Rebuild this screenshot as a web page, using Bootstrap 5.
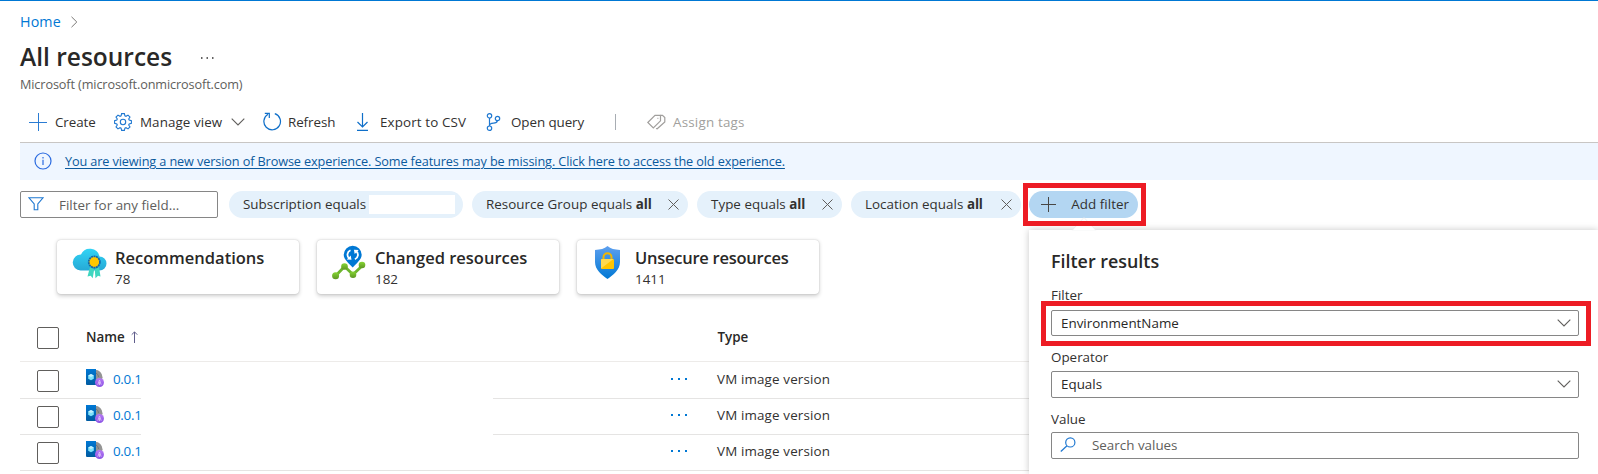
<!doctype html>
<html lang="en">
<head>
<meta charset="utf-8">
<title>All resources</title>
<link rel="stylesheet" href="https://cdn.jsdelivr.net/npm/bootstrap@5.3.0/dist/css/bootstrap.min.css">
<style>
body{font-family:"Open Sans","Noto Sans",sans-serif;font-size:13.4px;line-height:20px;color:#323130;background:#fff}
.portal{height:474px;border-top:1px solid #0078d4;padding-left:20px}
svg{flex:none;display:block}
.crumb{margin-top:11px;height:20px;font-size:14.3px;color:#0078d4}
.crumb a,.res-link{color:#0078d4;text-decoration:none}
.crumb a{letter-spacing:.1px}
.crumb svg{margin-left:9px}
.page-title{margin:8px 0 0;height:33px;line-height:33px;font-size:24.5px;font-weight:600;color:#292827}
.title-dots{margin:3px 0 0 29px}
.tenant{margin-top:1px;height:20px;font-size:12.7px;letter-spacing:-.12px;color:#605e5c}
.toolbar{margin-top:8px;height:41px;border-bottom:1px solid #c8c6c4;padding-left:9px}
.tool{gap:8px}
.tool span{letter-spacing:-.08px}
.tool>svg{margin-top:-1px}
.w1{width:85px}.w2{width:149px}.w3{width:90px}.w4{width:131px}.w5{width:131px}
.w1>svg{margin-top:0}
.tool.w2 span{letter-spacing:.08px}
.w2 span+svg{margin:0 0 0 1px}
.w3{gap:6px}
.w4,.w5{gap:9px}
.tool.w4 span{letter-spacing:.13px}
.sep{width:1px;height:16px;background:#a8adb3;margin-right:31px}
.off{color:#a19f9d;gap:7px}
.tool.off span{letter-spacing:.2px}
.banner{height:37px;background:#eff6ff;padding:0 0 1px 14px;gap:13px}
.banner a{font-size:12.7px;letter-spacing:-.115px;color:#0b5a9d;text-decoration:underline;text-underline-offset:2px;text-decoration-thickness:1px}
.filters{margin-top:11px;height:27px}
.find{width:198px;height:27px;border:1px solid #868686;border-radius:2px;padding:1px 0 0 8px;color:#605e5c;gap:15px}
.find svg{margin:-2px 0 0 -1px}
.find span{letter-spacing:.02px}
.pill{height:27px;border-radius:14px;background:#e5f1fb;padding:0 9px 1px 14px;color:#323130;white-space:pre;letter-spacing:.03px}
.pill b{font-weight:700;letter-spacing:-.1px}
.p1{width:234px;margin-left:11px}.p2{width:216px;margin-left:9px}.p3{width:145px;margin-left:9px}.p4{width:170px;margin-left:9px}
.p5{width:109px;margin-left:8px;background:#b3d6f2;padding:0 9px 1px 12px}
.blank{width:86px;height:19px;background:#fff;margin-left:auto;margin-right:-1px}
.tiles{margin:22px 0 0 37px;gap:18px}
.tile{width:242px;height:54px;border-radius:4px;background:#fff;box-shadow:0 1.6px 4px rgba(0,0,0,.2),0 0 1.5px rgba(0,0,0,.2);padding:5px 0 0 15px;gap:8px}
.tile h2{font-size:16.5px;line-height:24px;font-weight:600;margin:1px 0 0;color:#292827}
.tile:last-child h2{letter-spacing:-.25px}
.tile p{line-height:18px;margin:0}
.listing{margin-top:20px}
.head-row{height:48px;border-bottom:1px solid #edebe9;font-weight:600;color:#292827;letter-spacing:-.05px}
.first{margin-top:1px}
.res-row{display:grid;grid-template-columns:121px 352px 1fr;height:36px}
.res-row>.line{border-bottom:1px solid #e5e4e3}
.res-row.full>.gapcell{border-bottom:1px solid #e5e4e3}
.check{width:22px;height:22px;border:1px solid #605e5c;border-radius:2px;margin-left:17px;flex:none;background:#fff}
.res-row .check{margin-top:1px}
.name-head{margin:-2px 0 0 27px}
.name-head+svg{margin:-2px 0 0 6px}
.type-head{margin:-2px 0 0 580px}
.disk{margin:-6px 9px 0 27px}
.up{margin-top:-4px}
.dotcell{margin-left:177px}
.kind{margin-left:29px;letter-spacing:.15px}
.res-link{letter-spacing:-.3px}
.callout{position:absolute;left:1029px;top:230px;right:0;bottom:0;background:#fff;box-shadow:0 0 7px rgba(0,0,0,.22);padding:16px 19px 0 23px}
.callout>h3,.field-label{margin-left:-1px}
.beak{position:absolute;left:1070px;top:216px}
.callout h3{font-size:17.9px;line-height:30px;height:30px;font-weight:600;margin-bottom:9px;color:#292827}
.field-label{height:20px}
.box{border:1px solid #868686;border-radius:2px;height:27px;margin-left:-1px;padding:0 7px 0 9px;color:#292827}
.b1{margin:5px 0 11px -1px;height:26px}
.b2{margin:4px 0 11px -1px;padding-bottom:1px}
.b3{margin-top:3px;padding:0 0 1px 8px;gap:16px;color:#605e5c}
.b3 svg{margin-top:-1px}
.red{position:absolute;border:5px solid #ed1c24}
.r1{left:1023px;top:183px;width:123px;height:43px}
.r2{left:1041px;top:301px;width:550px;height:45px}
</style>
</head>
<body class="overflow-hidden">
<svg width="0" height="0" class="position-absolute"><defs>
<linearGradient id="gc" x1="0" y1="0" x2="0" y2="1"><stop stop-color="#32d4f5"/><stop offset="1" stop-color="#26a9d6"/></linearGradient>
<linearGradient id="gs" x1="0" y1="0" x2="0" y2="1"><stop stop-color="#5ea0ef"/><stop offset="1" stop-color="#0078d4"/></linearGradient>
<linearGradient id="gg" x1="0" y1="0" x2="0" y2="1"><stop stop-color="#86d633"/><stop offset="1" stop-color="#5e9624"/></linearGradient>
<linearGradient id="gp" x1="0" y1="0" x2="0" y2="1"><stop stop-color="#b77af4"/><stop offset="1" stop-color="#8a52e4"/></linearGradient>
<linearGradient id="gb" x1="0" y1="0" x2="0" y2="1"><stop stop-color="#0078d4"/><stop offset="1" stop-color="#005ba1"/></linearGradient>
<symbol id="x" viewBox="0 0 11 11"><path d="M.5 .5l10 10M10.500.5l-10 10" stroke="#605e5c" fill="none"/></symbol>
<symbol id="chev" viewBox="0 0 14 8"><path d="M.7.7L7 7 13.300.7" stroke="#605e5c" stroke-width="1.1" fill="none"/></symbol>
<symbol id="dots" viewBox="0 0 18 2"><path d="M1 0h2v2H1zM8 0h2v2H8zM15 0h2v2h-2z" fill="#0078d4"/></symbol>
<symbol id="disk" viewBox="0 0 18 18"><path d="M9 .8a7.500 7.500 0 0 1 0 15z" fill="#949494"/><path d="M10 4a4.500 4.500 0 0 1 2.500 4" stroke="#767676" fill="none"/><path d="M0 0h10v16H1a1 1 0 0 1-1-1z" fill="url(#gb)"/><path d="M5 5l2.800 1.500v3.200L5 11.200 2.200 9.700V6.500z" fill="#7fe3fb"/><path d="M5 5l2.800 1.500L5 8 2.200 6.500z" fill="#c3f1ff"/><circle cx="13.500" cy="13.500" r="4.500" fill="url(#gp)"/><path d="M11.800 15.700l1.700-4.700 1.700 4.700M13.500 13v3" stroke="#e3ccfb" stroke-width=".8" fill="none"/></symbol>
</defs></svg>
<main class="portal position-relative">
  <nav class="crumb d-flex align-items-center"><a href="#">Home</a><svg width="8" height="12" viewBox="0 0 8 12"><path d="M1.500.8L6.800 6l-5.300 5.200" stroke="#797775" fill="none"/></svg></nav>
  <h1 class="page-title d-flex align-items-center">All resources<svg class="title-dots" width="13" height="2" viewBox="0 0 13 2"><path d="M0 .3h1.500v1.500H0zM5.500.3H7v1.500H5.500zM11 .3h1.500v1.500H11z" fill="#323130"/></svg></h1>
  <div class="tenant">Microsoft (microsoft.onmicrosoft.com)</div>

  <div class="toolbar d-flex align-items-center">
    <div class="tool w1 d-flex align-items-center"><svg width="18" height="18"><path d="M9.500 0v18M0 9.500h18" stroke="#2b7cd3" fill="none"/></svg><span>Create</span></div>
    <div class="tool w2 d-flex align-items-center"><svg width="18" height="18" viewBox="0 0 18 18" fill="none" stroke="#1f78d1" stroke-width="1.100"><path d="M7.600.6h2.800l.5 2.200 1.100.5 2-1.200 2 2-1.300 1.900.5 1.100 2.200.5v2.800l-2.200.5-.5 1.100 1.300 1.900-2 2-2-1.200-1.100.5-.5 2.200H7.600l-.5-2.200-1.100-.5-2 1.200-2-2 1.300-1.900-.5-1.100L.6 10.400V7.600l2.200-.5.5-1.100L2 4.100l2-2 2 1.200 1.100-.5z"/><circle cx="9" cy="9" r="2.700"/></svg><span>Manage view</span><svg width="14" height="8"><use href="#chev"/></svg></div>
    <div class="tool w3 d-flex align-items-center"><svg width="19" height="19" viewBox="0 0 19 19" fill="none" stroke="#0f6fc9" stroke-width="1.200"><path d="M11.800 1.600A8.300 8.300 0 1 1 5 2.300"/><path d="M1.800 1.400h4.500v4.700"/></svg><span>Refresh</span></div>
    <div class="tool w4 d-flex align-items-center"><svg width="18" height="18" viewBox="0 0 18 18" fill="none" stroke="#0f6fc9" stroke-width="1.200"><path d="M9.500 0v14M4.500 9l5 5 5-5M4 17.300h11"/></svg><span>Export to CSV</span></div>
    <div class="tool w5 d-flex align-items-center"><svg width="18" height="18" viewBox="0 0 18 18" fill="none" stroke="#1f78d1" stroke-width="1.200"><circle cx="5.500" cy="2.800" r="2.200"/><circle cx="5.500" cy="15.200" r="2.200"/><circle cx="13.500" cy="5.500" r="2.200"/><path d="M5.500 5v8M13.300 7.800c-.3 2-1.500 2.200-3.800 2.400-2.500.2-4 .8-4 2.500"/></svg><span>Open query</span></div>
    <div class="sep"></div>
    <div class="tool off d-flex align-items-center"><svg width="19" height="16" viewBox="0 0 19 16" fill="none" stroke="#a19f9d" stroke-width="1.200"><path d="M.8 8.500L8 1.300h5.500v5.500L6.300 14z"/><path d="M9 14.500l1.200.3L17.800 8V3.500L15.500 1.300h-2"/><path d="M10.500 4.300h.8"/></svg><span>Assign tags</span></div>
  </div>

  <div class="banner d-flex align-items-center"><svg width="18" height="18" viewBox="0 0 18 18"><circle cx="9" cy="9" r="8" fill="none" stroke="#2b6be0" stroke-width="1.200"/><path d="M9 7.700V13M9 5v1.400" stroke="#2b6be0" stroke-width="1.200"/></svg><a href="#">You are viewing a new version of Browse experience. Some features may be missing. Click here to access the old experience.</a></div>

  <div class="filters d-flex">
    <div class="find d-flex align-items-center"><svg width="16" height="14" viewBox="0 0 16 14"><path d="M1 .8h14L9.800 7v5.800H6.200V7z" fill="none" stroke="#1f78d1" stroke-width="1.100"/></svg><span>Filter for any field...</span></div>
    <div class="pill p1 d-flex align-items-center">Subscription equals<span class="blank"></span></div>
    <div class="pill p2 d-flex align-items-center"><span>Resource Group equals <b>all</b></span><svg class="ms-auto" width="11" height="11"><use href="#x"/></svg></div>
    <div class="pill p3 d-flex align-items-center"><span>Type equals <b>all</b></span><svg class="ms-auto" width="11" height="11"><use href="#x"/></svg></div>
    <div class="pill p4 d-flex align-items-center"><span>Location equals <b>all</b></span><svg class="ms-auto" width="11" height="11"><use href="#x"/></svg></div>
    <div class="pill p5 d-flex align-items-center justify-content-between"><svg width="15" height="15"><path d="M7.500 0v15M0 7.500h15" stroke="#484644"/></svg><span>Add filter</span></div>
  </div>

  <div class="tiles d-flex">
    <div class="tile d-flex"><svg width="35" height="36" viewBox="0 0 35 36"><path d="M8.500 25.500A8 8 0 0 1 9 9.500 9.800 9.800 0 0 1 27.500 11.500a7 7 0 0 1 0 14z" fill="url(#gc)"/><path d="M18 22l-2.500 9.500 3.200-.8 2 2.500 1.500-9zM27 22l1.500 9.500-2.500-.8-2.500 2.500-.8-9z" fill="#3fd6c0"/><circle cx="22.300" cy="17" r="5.600" fill="#ffc800" stroke="#1464a8" stroke-width="1.700" stroke-dasharray="2 .5"/></svg><div><h2>Recommendations</h2><p>78</p></div></div>
    <div class="tile d-flex"><svg width="35" height="36" viewBox="0 0 35 36"><path d="M3.500 31L12.500 21.500l8.500 8 9.500-9" fill="none" stroke="#6db52d" stroke-width="2.800"/><g fill="url(#gg)"><circle cx="3.600" cy="30.700" r="3.500"/><circle cx="12.500" cy="21.500" r="3.300"/><circle cx="21" cy="29.700" r="3.300"/><circle cx="30" cy="20" r="3.300"/></g><path d="M20.700 22.500C17 18.500 11.700 14.500 11.700 9.800a9 9 0 0 1 18 0c0 4.700-5.300 8.700-9 12.700z" fill="#0078d4"/><path d="M18.500 5.200c-3.600 1.600-4 6-1.200 8.300M22.900 14.300c3.600-1.600 4-6 1.200-8.300" fill="none" stroke="#fff" stroke-width="1.800"/><path d="M14.700 14.600l4.800.2-.8-4.300zM26.700 4.900l-4.800-.2.800 4.300z" fill="#fff"/></svg><div><h2>Changed resources</h2><p>182</p></div></div>
    <div class="tile d-flex"><svg width="35" height="36" viewBox="0 0 35 36"><path d="M15.500 1c3.200 2.800 7 3.600 12.500 4v12c0 8-7 13-12.500 17C10 30 3 25 3 17V5c5.500-.4 9.300-1.200 12.500-4z" fill="url(#gs)"/><path d="M11.500 15v-2.800a4 4 0 0 1 8 0V15" fill="none" stroke="#f2b600" stroke-width="2"/><rect x="9" y="14" width="13" height="10" rx="1" fill="#ffc400"/><path d="M9 23.500V15a1 1 0 0 1 1-1h11.500z" fill="#ffd94f"/></svg><div><h2>Unsecure resources</h2><p>1411</p></div></div>
  </div>

  <section class="listing">
    <div class="head-row d-flex align-items-center"><span class="check"></span><span class="name-head">Name</span><svg width="7" height="12" viewBox="0 0 7 12"><path d="M3.500 12V1M.7 3.700L3.500.9l2.800 2.800" fill="none" stroke="#605e8c"/></svg><span class="type-head">Type</span></div>
    <div class="res-row first"><div class="line d-flex align-items-center"><span class="check"></span><svg class="disk" width="18" height="18"><use href="#disk"/></svg><a href="#" class="res-link up">0.0.1</a></div><div class="gapcell"></div><div class="line d-flex align-items-center"><svg class="up dotcell" width="18" height="2"><use href="#dots"/></svg><span class="up kind">VM image version</span></div></div>
    <div class="res-row"><div class="line d-flex align-items-center"><span class="check"></span><svg class="disk" width="18" height="18"><use href="#disk"/></svg><a href="#" class="res-link up">0.0.1</a></div><div class="gapcell"></div><div class="line d-flex align-items-center"><svg class="up dotcell" width="18" height="2"><use href="#dots"/></svg><span class="up kind">VM image version</span></div></div>
    <div class="res-row full"><div class="line d-flex align-items-center"><span class="check"></span><svg class="disk" width="18" height="18"><use href="#disk"/></svg><a href="#" class="res-link up">0.0.1</a></div><div class="gapcell"></div><div class="line d-flex align-items-center"><svg class="up dotcell" width="18" height="2"><use href="#dots"/></svg><span class="up kind">VM image version</span></div></div>
  </section>
</main>

<aside class="callout">
  <h3>Filter results</h3>
  <div class="field-label">Filter</div>
  <div class="box b1 d-flex align-items-center justify-content-between"><span>EnvironmentName</span><svg width="14" height="8"><use href="#chev"/></svg></div>
  <div class="field-label">Operator</div>
  <div class="box b2 d-flex align-items-center justify-content-between"><span>Equals</span><svg width="14" height="8"><use href="#chev"/></svg></div>
  <div class="field-label">Value</div>
  <div class="box b3 d-flex align-items-center"><svg width="16" height="15" viewBox="0 0 16 15"><circle cx="10.300" cy="5.400" r="4.600" fill="none" stroke="#1f78d1" stroke-width="1.200"/><path d="M7 8.700L.8 14.500" stroke="#1f78d1" stroke-width="1.200"/></svg><span>Search values</span></div>
</aside>
<svg class="beak" width="28" height="15" viewBox="0 0 28 15"><path d="M2 14.500L14 1.500l12 13z" fill="#fff" stroke="#e4e6e8" stroke-width=".6"/><path d="M1 14.300h26v.7H1z" fill="#fff"/></svg>
<div class="red r1"></div>
<div class="red r2"></div>
<script src="https://cdn.jsdelivr.net/npm/bootstrap@5.3.0/dist/js/bootstrap.bundle.min.js"></script>
</body>
</html>
